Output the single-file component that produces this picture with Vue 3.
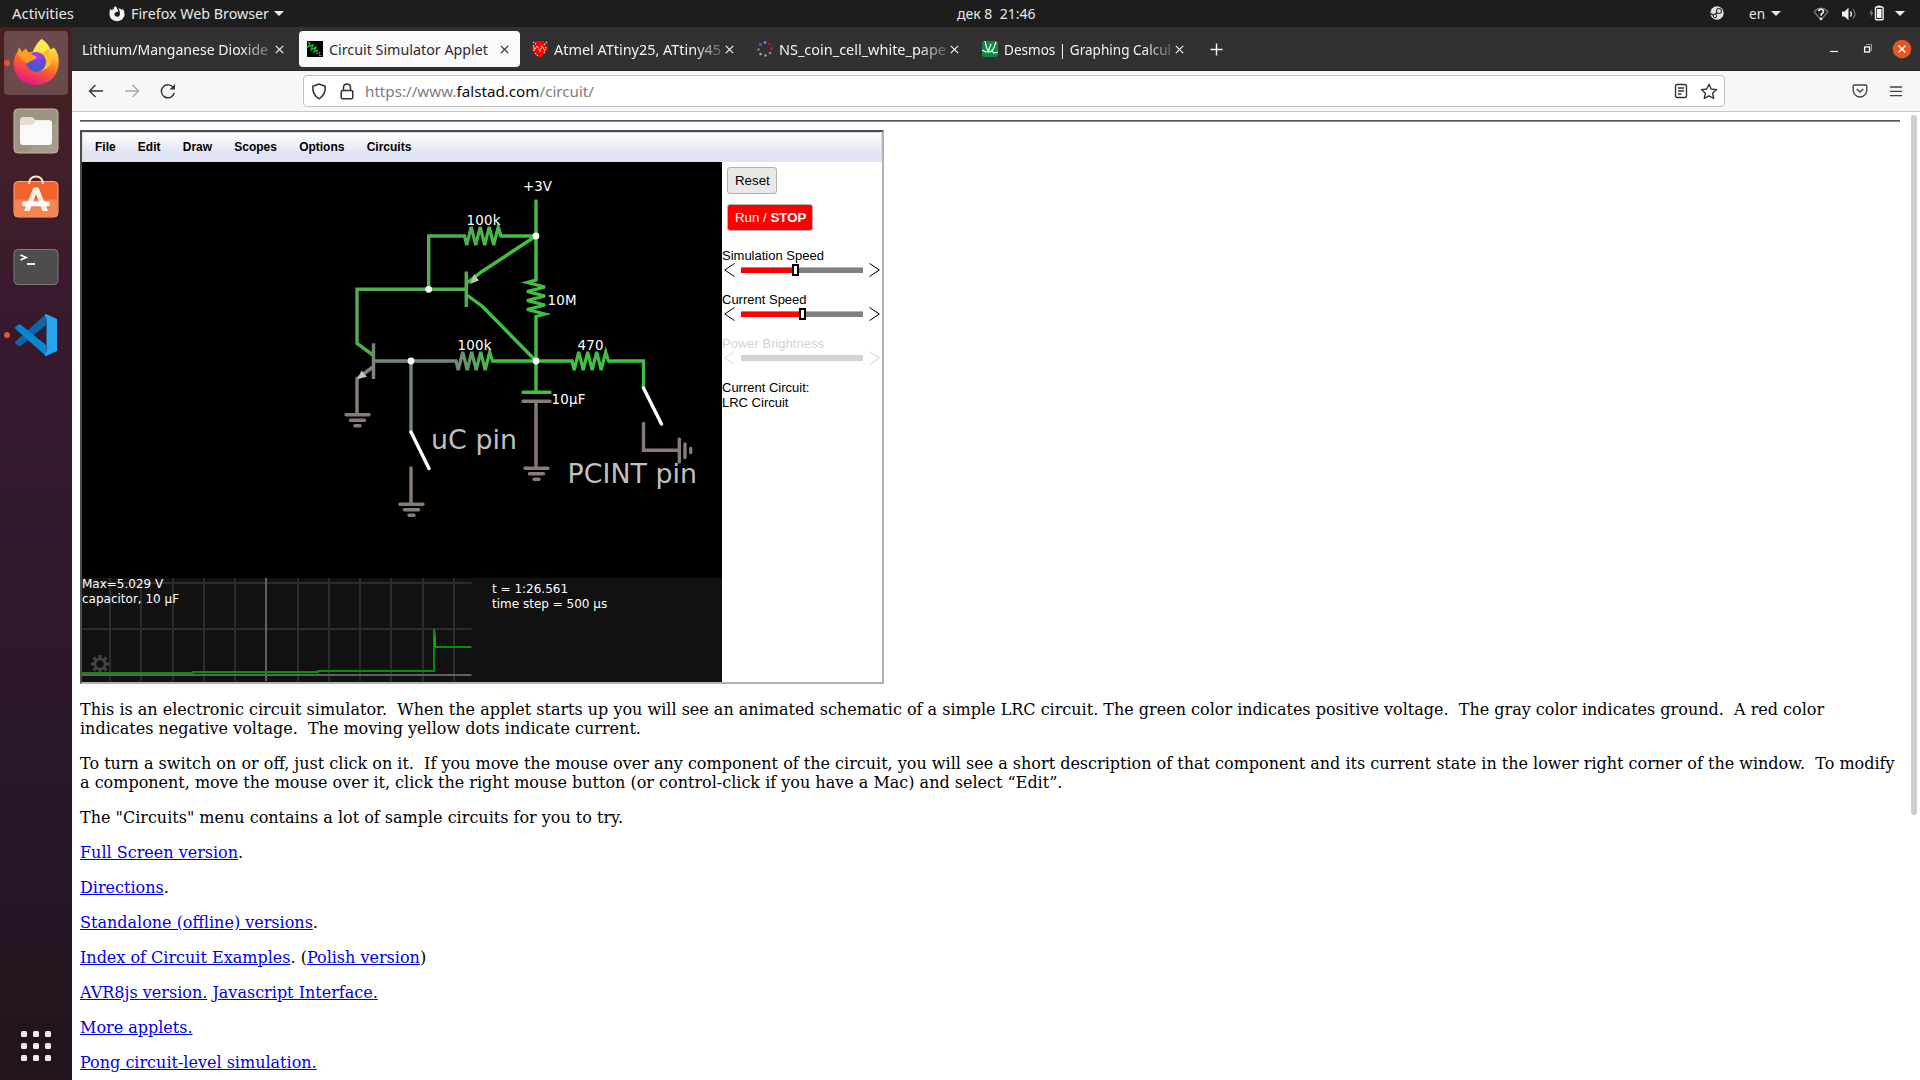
<script setup>
import { h } from 'vue'

// One line of UI text fitted to a fixed width
const FitText = (p) =>
  h('svg', { class: 'fit', width: p.w, height: 22 }, [
    h('text', { x: 0, y: 16, textLength: p.w, lengthAdjust: 'spacingAndGlyphs', fill: 'currentColor', style: 'white-space:pre' }, p.t),
  ])
FitText.props = ['w', 't']

const tabs = [
  { t: 'Lithium/Manganese Dioxide', w: 186, icon: '' },
  { t: 'Circuit Simulator Applet', w: 159, icon: 'circuit', active: true },
  { t: 'Atmel ATtiny25, ATtiny45', w: 167, icon: 'atmel' },
  { t: 'NS_coin_cell_white_pape', w: 167, icon: 'dots' },
  { t: 'Desmos | Graphing Calcul', w: 167, icon: 'desmos' },
]
const menus = ['File', 'Edit', 'Draw', 'Scopes', 'Options', 'Circuits']
const sliders = [
  { label: 'Simulation Speed', pos: 51 },
  { label: 'Current Speed', pos: 58 },
  { label: 'Power Brightness', off: true },
]
const gridX = [110, 141, 173, 204, 235, 298, 329, 360, 391, 423, 454]
const grounds = [[357, 414.7], [411, 504.3], [536, 468.3]]
const zig = 'l2.2 9 l4.5 -18 l4.5 18 l4.5 -18 l4.5 18 l4.5 -18 l4.5 18 l4.5 -18 l2.8 9'
const ringDots = [[8, 1.5, '#7b8fe0'], [12.5, 3.3, '#b01818'], [14.5, 7.5, '#d02020'], [13, 12, '#6a9a80'], [8.5, 14.5, '#7ab090'], [3.6, 13, '#9ab8a8'], [1.5, 8.5, '#6d7fd0'], [3.3, 3.6, '#5868c8']]
</script>

<template>
  <div class="desktop">
    <header class="topbar">
      <FitText class="activities" :w="62" t="Activities" />
      <svg class="ffmono" width="16" height="17" viewBox="0 0 16 17"><path d="M6 1.2Q8 2 8.2 4Q9.400 5 9.500 6.500L7.200 7Q5.200 7.500 5.400 9.500Q6 12 8.500 11.800Q11 11.400 11 8.500Q10.800 5.500 9.400 3.200Q12.300 3.600 13.500 5.400L13.400 3.200Q16 6 15.600 10Q14.500 15.600 8.500 16.200Q1.500 16 .5 10Q0 6 1.600 3.500L2.200 5.200L4.600 4Q4.600 2.400 6 1.200Z" fill="#f2f2f2"/></svg>
      <FitText class="appname" :w="138" t="Firefox Web Browser" />
      <i class="caret"></i>
      <FitText class="clock" :w="78.500" t="дек 8  21:46" />
      <svg class="steam" width="14" height="14" viewBox="0 0 14 14"><circle cx="7" cy="7" r="6.700" fill="#dedede"/><path d="M0 7.600L4.300 9.300L8.500 5.400" stroke="#333" stroke-width="1.800" fill="none"/><circle cx="9" cy="5" r="2.500" fill="#dedede" stroke="#333" stroke-width="1.100"/><circle cx="5" cy="10" r="1.700" fill="#dedede" stroke="#333"/></svg>
      <FitText class="lang" :w="16" t="en" />
      <i class="caret c2"></i>
      <svg class="wifi" width="16" height="14" viewBox="0 0 16 14"><path d="M1 4.500Q8-2 15 4.500L8 13L1 4.500" fill="none" stroke="#777" stroke-width="1.300"/><path d="M5.500 4.200Q6 2.300 8 2.300Q10.600 2.500 10.400 4.600Q10.200 6 8.200 7V8.700" fill="none" stroke="#f2f2f2" stroke-width="1.600"/><circle cx="8" cy="11.700" r="1.300" fill="#f2f2f2"/></svg>
      <svg class="vol" width="16" height="14" viewBox="0 0 16 14"><path d="M1 4.500H3.500L7.500 .8V13.200L3.500 9.500H1Z" fill="#f2f2f2"/><path d="M9.500 4.500Q11.300 7 9.500 9.500" fill="none" stroke="#f2f2f2" stroke-width="1.300"/><path d="M12 2.500Q16 7 12 11.500" fill="none" stroke="#777" stroke-width="1.200"/></svg>
      <svg class="bat" width="16" height="16" viewBox="0 0 16 16"><path d="M3 4L.5 8.600H2.500L1.600 12.500L4.200 7.600H2.200Z" fill="#999"/><path d="M8.500 .5h3v1.500h-3z" fill="#f2f2f2"/><rect x="6.500" y="2" width="7.600" height="12.700" rx="1" fill="none" stroke="#f2f2f2" stroke-width="1.400"/><path d="M8 4h4.500v9H8z" fill="#f2f2f2"/></svg>
      <i class="caret c3"></i>
    </header>

    <div class="main">
      <nav class="dock">
        <div class="app on"><i class="run"></i>
          <svg width="48" height="48" viewBox="0 0 48 48">
            <defs>
              <linearGradient id="ffb" x1=".75" y1="0" x2=".35" y2="1"><stop offset="0" stop-color="#fff44f"/><stop offset=".35" stop-color="#ffb02c"/><stop offset=".62" stop-color="#ff5a30"/><stop offset="1" stop-color="#e31587"/></linearGradient>
              <radialGradient id="ffp" cx=".6" cy=".2"><stop offset="0" stop-color="#b03bf5"/><stop offset=".6" stop-color="#7542e5"/><stop offset="1" stop-color="#4a55d8"/></radialGradient>
            </defs>
            <path d="M29.500 0Q36 4 38.500 10.500L42 8.500Q47.500 15 46.700 25Q45 44 24 46Q3 45 1.700 25Q1.500 18 6 12L7 8.500L10 13L14 9.500L16 13.500L21 12.500Q24 5 29.500 0Z" fill="url(#ffb)"/>
            <circle cx="24" cy="23" r="10" fill="url(#ffp)"/>
            <path d="M7 8.500L10 13L14 9.500Q15 13 19 14.500L24.500 18Q24 20.500 20.500 21.200Q17 22 15.500 24.500Q12 23 8 18.500L5.500 14Z" fill="#ff9b26"/>
            <path d="M29.500 0Q37 5 39 13Q41.500 20 37 27Q36 18 31 14Q27 12.500 21 12.500Q24 5 29.500 0Z" fill="#ffe64a"/>
            <path d="M31 14Q36 18 34 25Q32 31 28 32Q39 30 40 20Q40 14 36 10Z" fill="#ffbd2f"/>
          </svg>
        </div>
        <div class="app"><svg width="48" height="48" viewBox="0 0 48 48"><rect x="2" y="2" width="44" height="44" rx="4" fill="#9b9480" stroke="#c3bda9"/><path d="M45 14V45H15Z" fill="#aaa391" opacity=".6"/><path d="M8 13Q8 10 11 10H20L23.500 13H37Q40 13 40 16V25H8Z" fill="#e2ded2"/><path d="M8 18H20L24 13.500H38Q40 13.500 40 16V35Q40 38 37 38H11Q8 38 8 35Z" fill="#faf9f7"/></svg></div>
        <div class="app"><svg width="48" height="48" viewBox="0 0 48 48"><rect x="2" y="6.500" width="44" height="35.500" rx="4" fill="#f1622c" stroke="#ffac75"/><path d="M2.500 24.500h43V38q0 3.500-3.500 3.500H6q-3.500 0-3.500-3.500Z" fill="#f48453"/><path d="M17 9Q17.500 1.500 24 1.500Q30.500 1.500 31 9" fill="none" stroke="#ffe3bd" stroke-width="2.200"/><path d="M21.500 12.500H26.500L36 36H30.500L24 19L17.500 36H12Z" fill="#fff1e8"/><rect x="10" y="26.500" width="28" height="4.800" rx="2.400" fill="#fff"/></svg></div>
        <div class="app"><svg width="48" height="48" viewBox="0 0 48 48"><rect x="2" y="6.500" width="44" height="35" rx="4" fill="#4d4d4d" stroke="#7d7d7d"/><path d="M8.500 12L14 14.500L8.500 17" fill="none" stroke="#fff" stroke-width="1.800"/><path d="M15 21h8" stroke="#fff" stroke-width="1.800"/></svg></div>
        <div class="app"><i class="run"></i><svg width="48" height="48" viewBox="0 0 48 48"><path d="M3 32L6.500 35Q7.500 35.600 8.500 35L34 14V3L4 30Q2.500 31 3 32Z" fill="#0a65a9"/><path d="M3 16.500L6.500 13.500Q7.500 12.800 8.500 13.500L34 34V45L4 18.500Q2.500 17.500 3 16.500Z" fill="#0a85cf"/><path d="M34 3L45 8V40L34 45Q32 45 33 43L34.500 40V8L33 5Q32.500 3 34 3Z" fill="#26a4ee"/></svg></div>
        <div class="grid"><i v-for="n in 9" :key="n"></i></div>
      </nav>

      <section class="window">
        <div class="tabs">
          <div v-for="(tab, i) in tabs" :key="i" class="tab" :class="{ active: tab.active, first: !tab.icon }">
            <svg v-if="tab.icon === 'circuit'" class="fav" width="16" height="16" viewBox="0 0 16 16"><path d="M0 0h16v16H0z" fill="#000"/><path d="M1 1L3 3L1 6L6 4L4 9L9 6L7 11L11 9" fill="none" stroke="#18c818" stroke-width="1.300"/><path d="M11 9L9.500 13L13 11L12 15L15 14" fill="none" stroke="#666"/></svg>
            <svg v-if="tab.icon === 'atmel'" class="fav" width="16" height="16" viewBox="0 0 16 16"><path d="M4 0h8l1 3 3 4-2 5-3 1-1 3H6l-1-3L2 11 0 7l3-4Z" fill="#f00"/><path d="M1 10L5 5L8 10L10 5L13 10M1 4L3 9M15 1L12 4M1 1l3 2M14 6l-2 6M3 12l3 3" fill="none" stroke="#e4dcdc" stroke-width="1.100" stroke-dasharray="1.600 .8"/></svg>
            <svg v-if="tab.icon === 'dots'" class="fav" width="16" height="16" viewBox="0 0 16 16"><circle v-for="(d, k) in ringDots" :key="k" :cx="d[0]" :cy="d[1]" r="1.300" :fill="d[2]"/></svg>
            <svg v-if="tab.icon === 'desmos'" class="fav" width="16" height="16" viewBox="0 0 16 16"><rect width="16" height="16" rx="2" fill="#0c8a40"/><path d="M0 9L4 11L6 11L9 3M3 0Q5 11 8 11Q11 11 14 1M9 9L12 12L16 11" fill="none" stroke="#fff" stroke-width="1.200"/></svg>
            <span class="title" :class="{ fade: !tab.active }"><FitText :w="tab.w" :t="tab.t" /></span>
            <svg class="x" width="9" height="9" viewBox="0 0 9 9"><path d="M.8 .8L8.200 8.200M8.200 .8L.8 8.200" stroke="currentColor" stroke-width="1.200"/></svg>
          </div>
          <svg class="plus" width="13" height="13" viewBox="0 0 13 13"><path d="M6.500 .5v12M.5 6.500h12" stroke="#f5f5f5" stroke-width="1.400"/></svg>
          <svg class="wc" width="82" height="20" viewBox="0 0 82 20"><path d="M0 12.500h8" stroke="#fff" stroke-width="1.200"/><path d="M36 5.500h5.500v6.500" fill="none" stroke="#999"/><rect x="34.600" y="8" width="5" height="5" fill="none" stroke="#fff" stroke-width="1.300"/><circle cx="72" cy="10" r="9.300" fill="#e95420"/><path d="M68.500 6.500L75.500 13.500M75.500 6.500L68.500 13.500" stroke="#fff" stroke-width="1.500"/></svg>
        </div>

        <div class="toolbar">
          <svg width="16" height="16" viewBox="0 0 16 16" class="back"><path d="M15 8H2M7.500 2L1.500 8L7.500 14" fill="none" stroke="#333" stroke-width="1.400"/></svg>
          <svg width="16" height="16" viewBox="0 0 16 16" class="fwd"><path d="M1 8H14M8.500 2L14.500 8L8.500 14" fill="none" stroke="#aaa" stroke-width="1.400"/></svg>
          <svg width="16" height="16" viewBox="0 0 16 16" class="rel"><path d="M13.500 5A6.500 6.500 0 1 0 14.200 10" fill="none" stroke="#333" stroke-width="1.500"/><path d="M15 1v5.500H9.500Z" fill="#333"/></svg>
          <div class="url">
            <svg width="16" height="17" viewBox="0 0 16 17"><path d="M8 1L14.200 3.300Q14.700 12 8 15.800Q1.300 12 1.800 3.300Z" fill="none" stroke="#333" stroke-width="1.500" stroke-linejoin="round"/></svg>
            <svg class="lock" width="14" height="17" viewBox="0 0 14 17"><rect x="1.200" y="7.500" width="11.600" height="8.300" rx="1.500" fill="none" stroke="#333" stroke-width="1.500"/><path d="M3.500 7.500V4.500Q3.700 1 7 1Q10.300 1 10.500 4.500V7.500" fill="none" stroke="#333" stroke-width="1.500"/></svg>
            <svg class="fit addr" width="234" height="22"><text x="0" y="17" textLength="229" lengthAdjust="spacingAndGlyphs" fill="#7d7d7d">https://www.<tspan fill="#0c0c0d">falstad.com</tspan>/circuit/</text></svg>
            <svg class="reader" width="14" height="16" viewBox="0 0 14 16"><rect x="1.500" y="1.500" width="11" height="13" rx="1.500" fill="none" stroke="#333" stroke-width="1.400"/><path d="M4 5h6M4 8h6M4 11h3.500" stroke="#333" stroke-width="1.300"/></svg>
            <svg class="star" width="18" height="17" viewBox="0 0 18 17"><path d="M9 1.200L11.200 6L16.600 6.600L12.600 10.200L13.700 15.500L9 12.800L4.300 15.500L5.400 10.200L1.400 6.600L6.800 6Z" fill="none" stroke="#333" stroke-width="1.400" stroke-linejoin="round"/></svg>
          </div>
          <svg class="pocket" width="16" height="14" viewBox="0 0 16 14"><path d="M2.500 1H13.500Q14.800 1 14.800 2.500V6Q14.300 12.500 8 13Q1.700 12.500 1.200 6V2.500Q1.200 1 2.500 1Z" fill="none" stroke="#444" stroke-width="1.400"/><path d="M4.700 5L8 8L11.300 5" fill="none" stroke="#444" stroke-width="1.500"/></svg>
          <svg class="burger" width="12" height="11" viewBox="0 0 12 11"><path d="M0 1h12M0 5.300h12M0 9.600h12" stroke="#444" stroke-width="1.300"/></svg>
        </div>

        <div class="page">
          <div class="scroll"></div>
          <div class="rule"></div>
          <div class="frame">
            <div class="menubar"><span v-for="m in menus" :key="m">{{ m }}</span></div>
            <div class="sim">
              <svg class="canvas" width="640" height="520" viewBox="82 162 640 520">
                <defs>
                  <linearGradient id="g1" gradientUnits="userSpaceOnUse" x1="464" y1="0" x2="501" y2="0"><stop offset="0" stop-color="#51ad51"/><stop offset="1" stop-color="#41c041"/></linearGradient>
                  <linearGradient id="g2" gradientUnits="userSpaceOnUse" x1="456" y1="0" x2="493" y2="0"><stop offset="0" stop-color="#758777"/><stop offset="1" stop-color="#41c041"/></linearGradient>
                </defs>
                <rect x="82" y="162" width="640" height="520" fill="#000"/>
                <g fill="none" stroke-width="3.400" stroke-linecap="round">
                  <g stroke="#41c041">
                    <path d="M536 201V280M536 317V392M501 236H536M536 236L482 271.500L467.500 282.500M467.500 295.500L482.500 306.500L536 361M492.500 361H572M608.500 361H643.500V388M523 392.300H550"/>
                    <path :d="'M572 361' + zig" stroke-width="3.200"/>
                    <path d="M536 280l-9 2.500 l18 4.500 l-18 4.500 l18 4.500 l-18 4.500 l18 4.500 l-18 4.500 l18 4.500 l-9 2.500" stroke-width="3.200"/>
                  </g>
                  <g stroke="#51ad51">
                    <path d="M464.500 236H428.700V289.300H466M428.700 289.300H357V343.500L373 355"/>
                    <path d="M466.300 271.500V307" stroke-linecap="butt" stroke-width="3.500"/>
                  </g>
                  <path :d="'M464.500 236' + zig" stroke="url(#g1)" stroke-width="3.200"/>
                  <path d="M373.500 361H456M411 361V432" stroke="#758777"/>
                  <path d="M373.500 343.300V379" stroke="#758777" stroke-linecap="butt"/>
                  <path :d="'M456 361' + zig" stroke="url(#g2)" stroke-width="3.200"/>
                  <g stroke="#8a7b7b">
                    <path d="M373 367L357 378.500V414M523 401.300H550M536 402V468M411 468V504M643.500 423.500V450.300H679M679.300 439V462M685 444V457.500M690.700 448.500V452.500"/>
                    <path v-for="(g, i) in grounds" :key="i" :d="`M${g[0] - 11} ${g[1]}h23M${g[0] - 6.500} ${g[1] + 5.500}h14M${g[0] - 2} ${g[1] + 11}h5`"/>
                  </g>
                  <path d="M643.500 388L661.500 424M411 432L429 468.500" stroke="#fff"/>
                </g>
                <path d="M470 284L474.200 274L479 280.500ZM357.500 379L361.500 370.500L367 376.800Z" fill="#c0c0c0"/>
                <g fill="#fff"><circle cx="536" cy="236" r="3.400"/><circle cx="428.700" cy="289.300" r="3.400"/><circle cx="536" cy="361" r="3.400"/><circle cx="411" cy="361" r="3.400"/></g>
                <g class="lbl" font-size="13.400">
                  <text x="523" y="191" textLength="29">+3V</text>
                  <text x="466.500" y="225" textLength="34">100k</text>
                  <text x="547.500" y="305" textLength="29">10M</text>
                  <text x="457.500" y="350" textLength="34">100k</text>
                  <text x="577.500" y="350" textLength="26">470</text>
                  <text x="551.500" y="404" textLength="34">10µF</text>
                </g>
                <g class="lbl big" font-size="26.800">
                  <text x="431" y="448.700" textLength="86">uC pin</text>
                  <text x="567.500" y="483" textLength="129.500">PCINT pin</text>
                </g>
                <rect x="82" y="578" width="640" height="104" fill="#111"/>
                <path d="M82 583h389.500M82 629h389.500" stroke="#2c2c2c" stroke-width="2"/>
                <path v-for="x in gridX" :key="x" :d="`M${x} 578V681`" stroke="#2c2c2c" stroke-width="2"/>
                <path d="M266 578V681M82 675h389.500" stroke="#606060" stroke-width="2"/>
                <g stroke="#444" fill="none" stroke-width="2.600"><circle cx="100" cy="664" r="5"/><path d="M100 655v4M100 669v4M91 664h4M105 664h4M93.600 657.600l2.800 2.800M103.600 667.600l2.800 2.800M93.600 670.400l2.800-2.800M103.600 660.400l2.800-2.800" stroke-width="3"/></g>
                <path d="M82 673H193V672H318V671H434V629L435 636V647H471.500" fill="none" stroke="#0c8c0c" stroke-width="2"/>
                <path d="M435 636V647" stroke="#00c000" stroke-width="1.500"/>
                <g class="lbl" font-size="12">
                  <text x="82" y="588">Max=5.029 V</text><text x="82" y="603">capacitor, 10 µF</text>
                  <text x="492" y="593">t = 1:26.561</text><text x="492" y="608">time step = 500 µs</text>
                </g>
              </svg>
              <aside class="side">
                <button class="reset">Reset</button>
                <button class="stop">Run / <b>STOP</b></button>
                <div v-for="s in sliders" :key="s.label" class="slider" :class="{ off: s.off }">
                  <div class="cap">{{ s.label }}</div>
                  <div class="ctl">
                    <svg width="11" height="14" viewBox="0 0 11 14"><path d="M10.500 .5L.7 7L10.500 13.500" fill="none" stroke="currentColor"/></svg>
                    <div class="track"><template v-if="!s.off"><i class="fill" :style="{ width: s.pos + 'px' }"></i><i class="thumb" :style="{ left: s.pos + 'px' }"></i></template></div>
                    <svg width="11" height="14" viewBox="0 0 11 14"><path d="M.5 .5L10.300 7L.5 13.500" fill="none" stroke="currentColor"/></svg>
                  </div>
                </div>
                <div class="cur">Current Circuit:<br>LRC Circuit</div>
              </aside>
            </div>
          </div>
          <p>This is an electronic circuit simulator.&nbsp; When the applet starts up you will see an animated schematic of a simple LRC circuit. The green color indicates positive voltage.&nbsp; The gray color indicates ground.&nbsp; A red color<br>indicates negative voltage.&nbsp; The moving yellow dots indicate current.</p>
          <p>To turn a switch on or off, just click on it.&nbsp; If you move the mouse over any component of the circuit, you will see a short description of that component and its current state in the lower right corner of the window.&nbsp; To modify<br>a component, move the mouse over it, click the right mouse button (or control-click if you have a Mac) and select “Edit”.</p>
          <p>The "Circuits" menu contains a lot of sample circuits for you to try.</p>
          <p><a>Full Screen version</a>.</p>
          <p><a>Directions</a>.</p>
          <p><a>Standalone (offline) versions</a>.</p>
          <p><a>Index of Circuit Examples</a>. (<a>Polish version</a>)</p>
          <p><a>AVR8js version.</a> <a>Javascript Interface.</a></p>
          <p><a>More applets.</a></p>
          <p><a>Pong circuit-level simulation.</a></p>
        </div>
      </section>
    </div>
  </div>
</template>

<style>
html, body { margin: 0; overflow: hidden; }
</style>
<style scoped>
.desktop { width: 1920px; height: 1080px; overflow: hidden; display: flex; flex-direction: column; background: #fff; }
svg { display: block; flex: none; }
.fit { font: 15px "Noto Sans", "Open Sans", sans-serif; overflow: visible; }
.topbar { height: 27px; flex: none; background: #1d1d1d; color: #e8e8e8; display: flex; align-items: center; box-sizing: border-box; padding-left: 12px; }
.topbar .fit { font-size: 14.5px; margin-right: 2px; }
.ffmono { margin-left: 33px; }
.appname { margin-left: 6px; }
.caret { flex: none; width: 0; height: 0; border: 5px solid transparent; border-top-color: #eee; border-bottom: 0; margin-left: 3px; }
.clock { margin-left: 673px; }
.steam { margin-left: 672px; margin-bottom: 1px; }
.lang { margin-left: 25px; }
.c2 { margin-left: 4px; }
.wifi { margin-left: 32px; }
.vol { margin-left: 12px; }
.bat { margin-left: 12px; margin-bottom: 2px; }
.c3 { margin-left: 10px; }
.main { display: flex; flex: 1; min-height: 0; }
.dock { width: 72px; flex: none; box-sizing: border-box; padding: 4px 4px 19px; display: flex; flex-direction: column; gap: 4px; background: linear-gradient(#4b1f21 0, #421f29 120px, #37192e 300px, #331a2e 420px, #2b1828 700px, #21141e 1053px); }
.app { height: 64px; width: 64px; flex: none; display: flex; align-items: center; justify-content: center; border-radius: 4px; position: relative; }
.on { background: #6b4a4e; }
.run { position: absolute; left: 0; top: 29px; width: 6px; height: 6px; border-radius: 3px; background: #e95420; }
.grid { margin: auto auto 0; display: grid; grid-template-columns: repeat(3, 6px); gap: 6px; }
.grid i { height: 6px; border-radius: 1.5px; background: #f2f0ef; }
.window { flex: 1; min-width: 0; display: flex; flex-direction: column; }
.tabs { height: 44px; flex: none; box-sizing: border-box; border-bottom: 1px solid #242223; background: #323031; display: flex; align-items: center; padding: 1px 0 0 2px; }
.tab { width: 221px; height: 36px; margin-right: 4px; flex: none; box-sizing: border-box; padding: 0 11px 0 8px; display: flex; align-items: center; border-radius: 4px; color: #f3f3f3; }
.tab .fav { margin-right: 6px; }
.active { background: #f9f9f9; color: #2b2a33; }
.title { flex: 1; min-width: 0; height: 22px; padding-top: 1px; }
.fade { -webkit-mask-image: linear-gradient(90deg, #000 84%, rgba(0,0,0,.25)); mask-image: linear-gradient(90deg, #000 84%, rgba(0,0,0,.25)); }
.x { margin-left: 4px; }
.plus { margin-left: 11px; }
.wc { margin-left: auto; margin-right: 8px; }
.toolbar { height: 41px; flex: none; box-sizing: border-box; border-bottom: 1px solid #c6c6c6; background: #f7f7f7; display: flex; align-items: center; padding-left: 16px; }
.fwd, .rel { margin-left: 20px; }
.url { width: 1422px; height: 32px; box-sizing: border-box; margin-left: 127px; background: #fff; border: 1px solid #c0c0c0; border-radius: 4px; display: flex; align-items: center; padding: 0 6px 0 7px; }
.lock { margin-left: 13px; }
.addr { margin-left: 11px; }
.reader { margin-left: auto; }
.star { margin-left: 12px; }
.pocket { margin-left: 127px; }
.burger { margin-left: 22px; }
.page { flex: 1; min-height: 0; overflow: hidden; position: relative; padding: 8px 20px 0 8px; font: 16px/19px "DejaVu Serif", serif; color: #000; white-space: nowrap; }
.scroll { position: absolute; right: 3px; top: 3px; width: 6px; height: 700px; border-radius: 3px; background: #cdcdcd; }
.rule { height: 1px; background: #555; border-bottom: 1px solid #8a8a8a; margin-bottom: 8px; }
.frame { width: 800px; height: 550px; border: 2px solid; border-color: #4c4c4c #b2b2b2 #b2b2b2 #4c4c4c; }
.menubar { height: 30px; box-sizing: border-box; border: 1px solid #dcdce0; border-bottom-color: #e0e3f1; background: linear-gradient(#fff, #e0e3f3 75%); display: flex; gap: 22.2px; padding-left: 12px; font: bold 12px/29px "Liberation Sans", sans-serif; }
.sim { display: flex; }
.lbl { font-family: "DejaVu Sans", sans-serif; fill: #fff; }
.big { fill: #c0c0c0; }
.side { flex: 1; font: 13px/15px "Liberation Sans", sans-serif; display: flex; flex-direction: column; align-items: flex-start; padding-top: 5px; }
button { font: 13.3px "Liberation Sans", sans-serif; height: 27px; box-sizing: border-box; border: 1px solid #b0b0b0; border-radius: 3px; padding: 0 6px 0 7px; margin: 0 0 10px 5px; background: #e8e8e8; color: #000; }
.stop { background: #f00; color: #fff; margin-bottom: 17px; }
.slider { width: 159px; height: 44px; color: #000; }
.ctl { display: flex; align-items: center; gap: 6px; padding-left: 2px; }
.track { position: relative; width: 122px; height: 6px; background: linear-gradient(#b5b5b5 1px, #808080 1px); }
.fill { position: absolute; left: 0; top: 0; height: 6px; background: linear-gradient(#e66 1px, #f00 1px); }
.thumb { position: absolute; top: -3px; width: 3px; height: 8px; border: 2px solid #000; background: #fff; }
.off { color: #d3d3d3; }
.off .track { background: #d3d3d3; }
p { margin: 16px 0 0; }
a { color: #0000ee; text-decoration: underline; }
</style>
